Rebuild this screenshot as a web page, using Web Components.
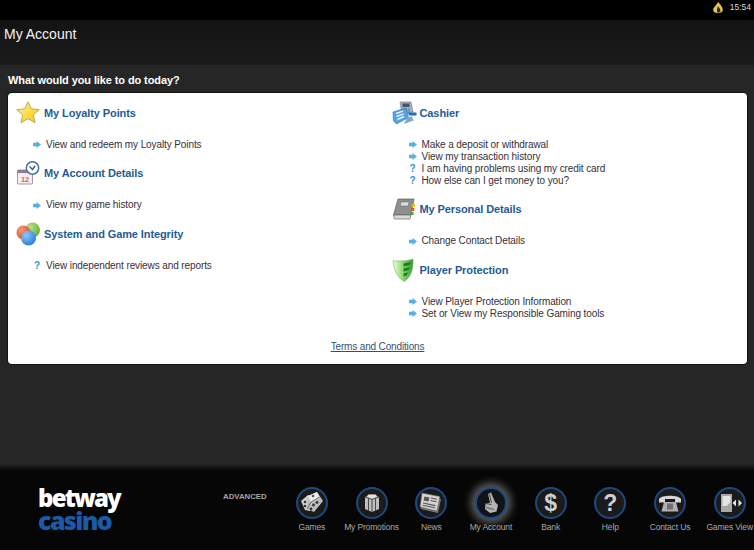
<!DOCTYPE html>
<html>
<head>
<meta charset="utf-8">
<title>My Account</title>
<style>
    html, body { margin: 0; padding: 0; height: 100%; background: #262626; overflow: hidden; }
    body { font-family: "Liberation Sans", Arial, sans-serif; }
</style>
</head>
<body>
<account-screen></account-screen>
<script>
const ICONS = {
    star: `<svg viewBox="0 0 24 23" width="24" height="23">
        <defs><linearGradient id="g" x1="0" y1="0" x2="1" y2="1"><stop offset="0" stop-color="#fff6b0"/><stop offset=".55" stop-color="#fcdc40"/><stop offset="1" stop-color="#f6c026"/></linearGradient></defs>
        <path d="M12 .8l3.300 7 7.900.9-5.900 5.200 1.800 7.800L12 17.700 4.900 21.700l1.800-7.800L.8 8.700l7.900-.9z" fill="url(#g)" stroke="#b9a860" stroke-width="1" stroke-linejoin="round"/></svg>`,
    calendar: `<svg viewBox="0 0 24 24" width="24" height="24">
        <rect x="1.500" y="9" width="15" height="14" rx="1" fill="#f4eef2" stroke="#a596ac"/>
        <rect x="1.500" y="9" width="15" height="3" fill="#8d7d98"/>
        <text x="9" y="20.500" text-anchor="middle" font-family="Liberation Sans" font-size="7.500" font-weight="700" fill="#dd6a3c">12</text>
        <circle cx="16.500" cy="7" r="6.200" fill="#f8fbff" stroke="#4a7697" stroke-width="1.500"/>
        <path d="M13.500 5.500l3 3 2.600-3.600" fill="none" stroke="#33536f" stroke-width="1.300"/></svg>`,
    balls: `<svg viewBox="0 0 24 24" width="24" height="24">
        <defs>
        <radialGradient id="r" cx=".35" cy=".3" r=".8"><stop offset="0" stop-color="#f59a70"/><stop offset="1" stop-color="#d9481f"/></radialGradient>
        <radialGradient id="v" cx=".35" cy=".3" r=".8"><stop offset="0" stop-color="#b6e58c"/><stop offset="1" stop-color="#5da92f"/></radialGradient>
        <radialGradient id="b" cx=".35" cy=".3" r=".8"><stop offset="0" stop-color="#8cc8fa"/><stop offset="1" stop-color="#1f78d6"/></radialGradient>
        </defs>
        <circle cx="16.500" cy="8" r="7.500" fill="url(#v)"/>
        <circle cx="7.500" cy="10.500" r="7" fill="url(#r)"/>
        <circle cx="12.500" cy="16" r="7.500" fill="url(#b)"/></svg>`,
    register: `<svg viewBox="0 0 25 24" width="25" height="24">
        <path d="M8 1h11l2 10-11 2z" fill="#a7b3be" stroke="#64747f" stroke-width=".6"/>
        <rect x="10.500" y="2.500" width="7" height="3.500" fill="#46566a"/>
        <path d="M11 8h7M11.500 10h7" stroke="#55656f" stroke-dasharray="1.500 1" stroke-width="1.200"/>
        <path d="M1 11l13-4 2.500 9.500L4.500 23 1.500 20z" fill="#55a4e4" stroke="#2f72ad" stroke-width=".6"/>
        <path d="M4 12.500l7-2.300M4.500 15.500l7-2.600M5.500 18.500l6.500-3" stroke="#e8f2fb" stroke-width="1.400" fill="none"/>
        <path d="M16 11.500h8.500v3H17z" fill="#1f6fb5"/>
        <path d="M15 16.500l5-1 1.500 4L12 23z" fill="#7fa9ca"/></svg>`,
    book: `<svg viewBox="0 0 24 22" width="24" height="22">
        <path d="M6 1h16l-3 16H1.500z" fill="#8f8f8b" stroke="#5c5c5c" stroke-width=".7"/>
        <path d="M1.500 17l1 4h15.500l1-4z" fill="#dcdcd6" stroke="#6a6a6a" stroke-width=".7"/>
        <path d="M9 4h8l-.6 4H8.300z" fill="#dcdcdc" stroke="#666" stroke-width=".5"/>
        <rect x="20" y="6" width="3" height="3" fill="#e5c224"/>
        <rect x="19.300" y="10" width="3" height="3" fill="#e0552c"/>
        <rect x="18.600" y="14" width="3" height="3" fill="#58a639"/></svg>`,
    shield: `<svg viewBox="0 0 22 24" width="22" height="24">
        <defs><linearGradient id="s" x1="0" y1="0" x2="1" y2="0"><stop offset="0" stop-color="#eefae6"/><stop offset=".45" stop-color="#96dc72"/><stop offset="1" stop-color="#2e9a34"/></linearGradient></defs>
        <path d="M1 2.500c4 .8 14 .8 20-1.500 .6 10-2 18-8.500 22.500C5.500 20 1.500 12 1 2.500z" fill="url(#s)" stroke="#7db56a" stroke-width=".6"/>
        <path d="M11.500 5.500l7-1.500-.5 3-6.500 1.500zM11.500 10.500l6-1.400-.7 3-5.300 1.400zM11.500 15.500l4.500-1.200-1.200 3-3.300 1.200z" fill="#17802b"/></svg>`,
    games: `<svg viewBox="0 0 32 32" width="32" height="32">
        <path d="M5 14l7-6 5 3-3 13-5-1z" fill="#cfcfcf"/>
        <path d="M12 9l9-4 6 9-9 11-7-3z" fill="#bdbdbd"/>
        <path d="M12 9l9-4 2.500 5-8.500 5z" fill="#ededed"/>
        <path d="M15 15l-4 7M15 15l8.500-5" stroke="#555" stroke-width=".8" fill="none"/>
        <circle cx="9" cy="15" r="1.300" fill="#333"/><circle cx="9" cy="19" r="1.300" fill="#333"/>
        <circle cx="17.500" cy="18" r="1.400" fill="#333"/><circle cx="21" cy="15.500" r="1.400" fill="#333"/>
        <circle cx="15" cy="22" r="1.400" fill="#333"/><circle cx="17" cy="9" r="1.300" fill="#555"/></svg>`,
    promo: `<svg viewBox="0 0 32 32" width="32" height="32">
        <path d="M9 10l7-2.500 7 2.500v12l-7 3-7-3z" fill="#c2c2c2"/>
        <path d="M9 10l7 2.500 7-2.500" fill="none" stroke="#4a4a4a"/>
        <path d="M16 12.500V25M12.500 11.300V24M19.500 11.300V24" stroke="#4a4a4a" stroke-width="1.100"/>
        <path d="M12 7.500h8l1 2-5 1.500-5-1.500z" fill="#e2e2e2"/></svg>`,
    news: `<svg viewBox="0 0 32 32" width="32" height="32">
        <path d="M8 9l18 3-3 14-17-4z" fill="#7a7a7a"/>
        <path d="M7 6l18 3.500-3 14.500-17-4z" fill="#d4d4d4" stroke="#555" stroke-width=".6"/>
        <path d="M9.500 9.500l5 1-1 4-5-1z" fill="#555"/>
        <path d="M16 11l6 1.200M15.500 13.500l6 1.200M8 16l12.500 2.600M7.600 18.200l12.500 2.600" stroke="#555" stroke-width="1.100"/></svg>`,
    account: `<svg viewBox="0 0 32 32" width="32" height="32">
        <path d="M13 7l3-1.500 4 9.500 3 3-1.500 6.500-6.500 1.500-5-4 .5-5 4.500-1.500z" fill="#b4b4b4"/>
        <path d="M14.500 7l2 9M10 16.500l6.500 1" stroke="#484848" stroke-width="1" fill="none"/>
        <path d="M11 20.500l8 2" stroke="#777" stroke-width="1.400"/></svg>`,
    phone: `<svg viewBox="0 0 32 32" width="32" height="32">
        <path d="M5 12c2-4.500 20-4.500 22 0v3.500h-6V12H11v3.500H5z" fill="#d6d6d6"/>
        <path d="M10 15h12l2.500 9.500h-17z" fill="#b0b0b0"/>
        <rect x="13" y="16.500" width="6" height="6" fill="#707070"/></svg>`,
    view: `<svg viewBox="0 0 32 32" width="32" height="32">
        <rect x="7" y="7" width="11" height="18" fill="#a8a8a8"/>
        <path d="M8.500 9h8v6l-4 4h-4z" fill="#e4e4e4"/>
        <path d="M18.500 16l3.500-3.500v7zM28 16l-3.500-3.500v7z" fill="#e6e6e6"/></svg>`
};

class AppIcon extends HTMLElement {
    constructor() {
        super();
        this.attachShadow({ mode: 'open' });
    }

    connectedCallback() {
        this.shadowRoot.innerHTML = `
            <style>
                :host { display: block; line-height: 0; }
            </style>
            ${ICONS[this.getAttribute('name')]}
        `;
    }
}

class StatusBar extends HTMLElement {
    constructor() {
        super();
        this.attachShadow({ mode: 'open' });
    }

    connectedCallback() {
        this.shadowRoot.innerHTML = `
            <style>
                :host {
                    display: flex;
                    justify-content: flex-end;
                    align-items: center;
                    gap: 7px;
                    height: 20px;
                    padding: 0 3px 6px 0;
                    box-sizing: border-box;
                    background: #000;
                    color: #d8d8d8;
                    font-size: 8.5px;
                }
                svg { display: block; }
            </style>
            <svg viewBox="0 0 10 11" width="10" height="11">
                <path d="M5 0C7 2 9.800 5 9.800 8 9.800 10 8 11 5 11S.2 10 .2 8C.2 5.500 3 4 5 0z" fill="#e8c455"/>
                <path d="M5 4C6 6 7.500 7 7.500 9 7.500 10 6 10.500 5 10.500 4.200 10.500 3.800 9 4 7.500z" fill="#2a2410"/>
            </svg>
            <span><slot></slot></span>
        `;
    }
}

class PageTitle extends HTMLElement {
    constructor() {
        super();
        this.attachShadow({ mode: 'open' });
    }

    connectedCallback() {
        this.shadowRoot.innerHTML = `
            <style>
                :host {
                    display: block;
                    height: 45px;
                    padding: 6px 0 0 4px;
                    box-sizing: border-box;
                    background: linear-gradient(#131313, #1b1b1b);
                    color: #f2f2f2;
                    font-size: 14px;
                    line-height: 16px;
                }
            </style>
            <slot></slot>
        `;
    }
}

class LinkRow extends HTMLElement {
    constructor() {
        super();
        this.attachShadow({ mode: 'open' });
    }

    connectedCallback() {
        const isHelp = this.getAttribute('kind') === 'help';
        const marker = isHelp
            ? '<span class="q">?</span>'
            : `<svg viewBox="0 0 8 7" width="8" height="7"><path d="M0 1.800h3.500V0L8 3.500 3.500 7V5.200H0z" fill="#58b2e0"/></svg>`;
        this.shadowRoot.innerHTML = `
            <style>
                :host {
                    display: flex;
                    align-items: center;
                    height: 12px;
                    font-size: 10px;
                    letter-spacing: -.1px;
                    line-height: 12px;
                    color: #35303a;
                    white-space: nowrap;
                }
                .marker {
                    flex: none;
                    display: flex;
                    align-items: center;
                    justify-content: center;
                    width: 8px;
                    margin-right: 5px;
                }
                .q { font-weight: 700; font-size: 10px; color: #2f95c9; }
                svg { display: block; }
            </style>
            <span class="marker">${marker}</span>
            <slot></slot>
        `;
    }
}

class AccountSection extends HTMLElement {
    constructor() {
        super();
        this.attachShadow({ mode: 'open' });
    }

    connectedCallback() {
        this.shadowRoot.innerHTML = `
            <style>
                :host { display: block; padding-bottom: 10.5px; }
                .head {
                    display: flex;
                    align-items: center;
                    height: 24px;
                    font-size: 11px;
                    letter-spacing: -.1px;
                    font-weight: 700;
                    color: #1f5c96;
                }
                .icon { flex: none; width: 28px; }
                .links { display: block; padding: 14px 0 0 17px; }
            </style>
            <div class="head">
                <div class="icon"><app-icon name="${this.getAttribute('icon')}"></app-icon></div>
                <span>${this.getAttribute('heading')}</span>
            </div>
            <div class="links"><slot></slot></div>
        `;
    }
}

class MenuCard extends HTMLElement {
    constructor() {
        super();
        this.attachShadow({ mode: 'open' });
    }

    connectedCallback() {
        this.shadowRoot.innerHTML = `
            <style>
                :host {
                    display: block;
                    height: 271px;
                    margin: 0 7px 0 8px;
                    padding: 7.5px 8px 0;
                    box-sizing: border-box;
                    background: #fff;
                    border-radius: 4px;
                    box-shadow: 0 0 0 1px #111;
                    color: #333;
                }
                .columns { display: grid; grid-template-columns: 375.5px 1fr; height: 240.5px; }
                .terms {
                    display: block;
                    text-align: center;
                    font-size: 10px;
                    letter-spacing: -.15px;
                    line-height: 12px;
                    color: #33516f;
                    text-decoration: underline;
                }
            </style>
            <div class="columns">
                <div><slot name="left"></slot></div>
                <div><slot name="right"></slot></div>
            </div>
            <a class="terms"><slot name="terms"></slot></a>
        `;
    }
}

class NavItem extends HTMLElement {
    constructor() {
        super();
        this.attachShadow({ mode: 'open' });
    }

    connectedCallback() {
        const glyph = this.getAttribute('glyph');
        const inner = glyph
            ? `<span class="glyph">${glyph}</span>`
            : `<app-icon name="${this.getAttribute('icon')}"></app-icon>`;
        this.shadowRoot.innerHTML = `
            <style>
                :host {
                    display: flex;
                    flex-direction: column;
                    align-items: center;
                    flex: none;
                    width: 59.7px;
                    font-size: 8.5px;
                    letter-spacing: -.15px;
                    color: #a9a9a9;
                    white-space: nowrap;
                }
                .ring {
                    display: flex;
                    align-items: center;
                    justify-content: center;
                    width: 32px;
                    height: 32px;
                    box-sizing: border-box;
                    border: 2px solid #1c4a80;
                    border-radius: 50%;
                    background: #1b1b1b;
                    margin-bottom: 2px;
                }
                app-icon { margin: -2px; }
                :host([active]) .ring {
                    background: #101418;
                    box-shadow: 0 0 8px 4px rgba(190, 190, 190, .5);
                }
                .glyph {
                    font-size: 23px;
                    line-height: 28px;
                    font-weight: 700;
                    color: #cfcfcf;
                    font-family: "Liberation Sans", sans-serif;
                }
                .label { line-height: 12px; }
            </style>
            <div class="ring">${inner}</div>
            <div class="label"><slot></slot></div>
        `;
    }
}

class BottomNav extends HTMLElement {
    constructor() {
        super();
        this.attachShadow({ mode: 'open' });
    }

    connectedCallback() {
        this.shadowRoot.innerHTML = `
            <style>
                :host {
                    display: grid;
                    grid-template-columns: 185px 59px 1fr;
                    height: 85px;
                    padding-left: 38px;
                    box-sizing: border-box;
                    background: linear-gradient(#202020 0, #060606 6px, #050505 100%);
                }
                .logo {
                    padding-top: 21px;
                    font-family: "Open Sans", sans-serif;
                    font-weight: 800;
                    font-size: 24px;
                    line-height: 23px;
                    letter-spacing: -1.8px;
                    color: #fff;
                }
                .logo b { display: block; font-weight: 800; font-size: 25px; color: #1c5aa8; letter-spacing: -1.6px; }
                .advanced {
                    padding-top: 27px;
                    font-size: 7.8px;
                    line-height: 10px;
                    font-weight: 700;
                    color: #a5a5a5;
                }
                .items { display: flex; padding-top: 22px; }
            </style>
            <div class="logo">betway<b>casino</b></div>
            <div class="advanced">ADVANCED</div>
            <div class="items"><slot></slot></div>
        `;
    }
}

class AccountScreen extends HTMLElement {
    constructor() {
        super();
        this.attachShadow({ mode: 'open' });
    }

    connectedCallback() {
        this.shadowRoot.innerHTML = `
            <style>
                :host {
                    display: flex;
                    flex-direction: column;
                    width: 754px;
                    height: 550px;
                    overflow: hidden;
                    font-family: "Liberation Sans", Arial, sans-serif;
                }
                main { flex: 1; background: #262626; }
                h2 {
                    margin: 0;
                    height: 28px;
                    padding: 8px 0 0 8px;
                    box-sizing: border-box;
                    font-size: 11px;
                    letter-spacing: -.1px;
                    line-height: 14px;
                    color: #fff;
                }
            </style>
            <status-bar>15:54</status-bar>
            <page-title>My Account</page-title>
            <main>
                <h2>What would you like to do today?</h2>
                <menu-card>
                    <div slot="left">
                        <account-section icon="star" heading="My Loyalty Points">
                            <link-row>View and redeem my Loyalty Points</link-row>
                        </account-section>
                        <account-section icon="calendar" heading="My Account Details">
                            <link-row>View my game history</link-row>
                        </account-section>
                        <account-section icon="balls" heading="System and Game Integrity">
                            <link-row kind="help">View independent reviews and reports</link-row>
                        </account-section>
                    </div>
                    <div slot="right">
                        <account-section icon="register" heading="Cashier">
                            <link-row>Make a deposit or withdrawal</link-row>
                            <link-row>View my transaction history</link-row>
                            <link-row kind="help">I am having problems using my credit card</link-row>
                            <link-row kind="help">How else can I get money to you?</link-row>
                        </account-section>
                        <account-section icon="book" heading="My Personal Details">
                            <link-row>Change Contact Details</link-row>
                        </account-section>
                        <account-section icon="shield" heading="Player Protection">
                            <link-row>View Player Protection Information</link-row>
                            <link-row>Set or View my Responsible Gaming tools</link-row>
                        </account-section>
                    </div>
                    <span slot="terms">Terms and Conditions</span>
                </menu-card>
            </main>
            <bottom-nav>
                <nav-item icon="games">Games</nav-item>
                <nav-item icon="promo">My Promotions</nav-item>
                <nav-item icon="news">News</nav-item>
                <nav-item icon="account" active>My Account</nav-item>
                <nav-item glyph="$">Bank</nav-item>
                <nav-item glyph="?">Help</nav-item>
                <nav-item icon="phone">Contact Us</nav-item>
                <nav-item icon="view">Games View</nav-item>
            </bottom-nav>
        `;
    }
}

customElements.define('app-icon', AppIcon);
customElements.define('status-bar', StatusBar);
customElements.define('page-title', PageTitle);
customElements.define('link-row', LinkRow);
customElements.define('account-section', AccountSection);
customElements.define('menu-card', MenuCard);
customElements.define('nav-item', NavItem);
customElements.define('bottom-nav', BottomNav);
customElements.define('account-screen', AccountScreen);
</script>
</body>
</html>
